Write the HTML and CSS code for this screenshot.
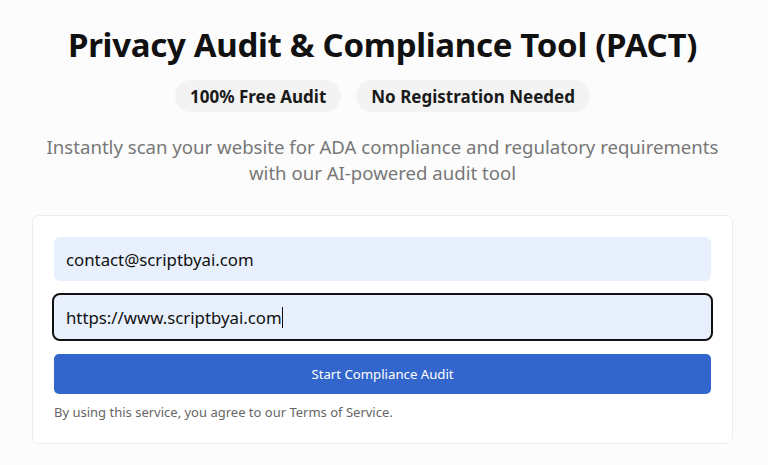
FILE: index.html
```html
<!DOCTYPE html>
<html lang="en">
<head>
<meta charset="utf-8">
<title>PACT</title>
<link rel="stylesheet" href="styles.css">
</head>
<body>
<main class="page">
  <header class="hero">
    <h1 class="title">Privacy Audit &amp; Compliance Tool (PACT)</h1>
    <div class="badges">
      <span class="badge">100% Free Audit</span>
      <span class="badge">No Registration Needed</span>
    </div>
    <p class="lead">Instantly scan your website for ADA compliance and regulatory requirements with our AI-powered audit tool</p>
  </header>
  <form class="card">
    <div class="field">contact@scriptbyai.com</div>
    <div class="field focused">https://www.scriptbyai.com<span class="caret"></span></div>
    <button type="button" class="submit">Start Compliance Audit</button>
    <p class="terms">By using this service, you agree to our Terms of Service.</p>
  </form>
</main>
</body>
</html>
```
FILE: styles.css
```css
* { box-sizing: border-box; }
html, body { margin: 0; padding: 0; }
body {
  background: #fcfcfc;
  font-family: "Noto Sans", "Open Sans", sans-serif;
  color: #111;
}
.page {
  width: 701px;
  margin-left: 32px;
  padding-top: 23px;
}
.hero {
  display: flex;
  flex-direction: column;
  align-items: center;
}
.title {
  margin: 0;
  font-size: 33px;
  line-height: 44px;
  font-weight: 700;
  color: #111;
  letter-spacing: -0.3px;
  white-space: nowrap;
}
.badges {
  display: flex;
  gap: 15px;
  margin-top: 13px;
}
.badge {
  background: #f3f3f3;
  border-radius: 16px;
  height: 32px;
  padding: 0 15px;
  display: flex;
  align-items: center;
  font-size: 17px;
  font-weight: 700;
  color: #1a1a1a;
}
.lead {
  margin: 22px 0 0;
  width: 700px;
  text-align: center;
  font-size: 18.6px;
  line-height: 26px;
  color: #777;
}
.card {
  margin-top: 29px;
  background: #fff;
  border: 1px solid #ececec;
  border-radius: 7px;
  padding: 21px 21px 22px;
  display: flex;
  flex-direction: column;
}
.field {
  height: 44px;
  background: #e8f0fe;
  border-radius: 6px;
  padding: 0 12px;
  display: flex;
  align-items: center;
  font-size: 16.8px;
  color: #111;
}
.field.focused {
  margin-top: 14px;
  outline: 2px solid #111;
  outline-offset: 0;
}
.caret {
  display: inline-block;
  width: 1px;
  height: 21px;
  background: #111;
}
.submit {
  margin-top: 15px;
  height: 40px;
  border: 0;
  border-radius: 5px;
  background: #3366cc;
  color: #fff;
  font-family: inherit;
  font-size: 13.2px;
}
.terms {
  margin: 9px 0 0;
  font-size: 13px;
  line-height: 18px;
  color: #666;
}
```
